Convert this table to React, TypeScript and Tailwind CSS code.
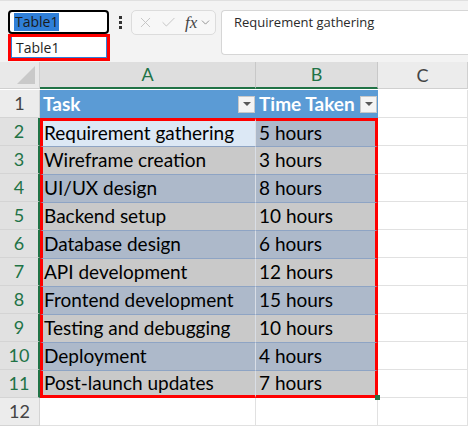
import { Check, ChevronDown, X } from "lucide-react";

const rows = [
    { task: "Requirement gathering", time: "5 hours" },
    { task: "Wireframe creation", time: "3 hours" },
    { task: "UI/UX design", time: "8 hours" },
    { task: "Backend setup", time: "10 hours" },
    { task: "Database design", time: "6 hours" },
    { task: "API development", time: "12 hours" },
    { task: "Frontend development", time: "15 hours" },
    { task: "Testing and debugging", time: "10 hours" },
    { task: "Deployment", time: "4 hours" },
    { task: "Post-launch updates", time: "7 hours" },
];

const cellFont = { fontFamily: "Lato, 'Liberation Sans', sans-serif" };

function FilterButton() {
    return (
        <span className="w-[17px] h-[17px] shrink-0 bg-[#f4f4f4] border border-[#c8c8c8] flex items-center justify-center">
            <span className="w-0 h-0 border-l-[4px] border-r-[4px] border-t-[4px] border-l-transparent border-r-transparent border-t-[#595959]" />
        </span>
    );
}

export default function App() {
    return (
        <div
            className="w-[468px] h-[426px] bg-[#f3f3f3] overflow-hidden"
            style={{ fontFamily: "'Segoe UI', 'Open Sans', sans-serif" }}
        >
            {/* toolbar */}
            <div className="relative h-[62px] flex items-start pt-[9px] border-t border-[#e0e0e0]">
                <div className="ml-[8px] w-[101px] h-[24px] border-2 border-black rounded-[4px] bg-white flex items-center pl-[4px]">
                    <span className="bg-[#2f7fd8] text-[#1a1a1a] text-[14px] leading-[18px] px-[1px]">Table1</span>
                </div>
                {/* name box dropdown */}
                <div className="absolute left-[8px] top-[33px] w-[102px] h-[27px] border-[3px] border-[#ff0000] bg-white">
                    <div className="h-full border border-[#2f7fd8] border-t-0 flex items-center pl-[4px] text-[14px] text-[#1f1f1f]">
                        Table1
                    </div>
                </div>
                <div className="w-[22px] h-[24px] flex flex-col items-center justify-center gap-[2px]">
                    <span className="w-[3px] h-[3px] bg-[#333]" />
                    <span className="w-[3px] h-[3px] bg-[#333]" />
                    <span className="w-[3px] h-[3px] bg-[#333]" />
                </div>
                <div className="w-[85px] h-[25px] border border-[#dcdcdc] rounded-[5px] bg-[#f7f7f7] flex items-center pl-[5px] text-[#c2c2c2]">
                    <X size={17} strokeWidth={1.3} />
                    <Check size={17} strokeWidth={1.3} className="ml-[6px]" />
                    <span
                        className="ml-[8px] text-[#444] italic text-[17px] leading-none"
                        style={{ fontFamily: "'Liberation Serif', serif" }}
                    >
                        fx
                    </span>
                    <ChevronDown size={13} strokeWidth={1.4} className="ml-[2px] text-[#777]" />
                </div>
                <div className="ml-[5px] flex-1 h-[45px] bg-white border border-[#d6d6d6] border-r-0 rounded-l-[4px] pl-[12px] pt-[2px] text-[13px] text-[#2a2a2a]">
                    Requirement gathering
                </div>
            </div>

            {/* grid */}
            <div
                className="grid grid-cols-[40px_216px_122px_1fr] auto-rows-[28px] bg-white"
                style={cellFont}
            >
                {/* column header */}
                <div className="h-[27px] bg-[#e9e9e9] border-r border-b border-[#d0d0d0] relative">
                    <span className="absolute right-[4px] bottom-[4px] w-0 h-0 border-l-[18px] border-b-[18px] border-l-transparent border-b-[#c9c9c9]" />
                </div>
                <div className="h-[27px] bg-[#dedede] border-r border-[#c8c8c8] border-b-2 border-b-[#217346] flex items-center justify-center text-[#217346] text-[18px]">
                    A
                </div>
                <div className="h-[27px] bg-[#dedede] border-r border-[#c8c8c8] border-b-2 border-b-[#217346] flex items-center justify-center text-[#217346] text-[18px]">
                    B
                </div>
                <div className="h-[27px] bg-[#ececec] border-r border-b border-[#d0d0d0] flex items-center justify-center text-[#444] text-[18px]">
                    C
                </div>

                {/* row 1 - table header */}
                <div className="bg-[#ececec] border-r border-b border-[#d4d4d4] flex items-center justify-center text-[18px] text-[#444]">
                    1
                </div>
                <div className="bg-[#5b9bd5] flex items-center justify-between pl-[3px] pr-[1px] text-white font-bold text-[19px]">
                    <span>Task</span>
                    <FilterButton />
                </div>
                <div className="bg-[#5b9bd5] flex items-center justify-between pl-[3px] pr-[1px] text-white font-bold text-[19px] whitespace-nowrap">
                    <span>Time Taken</span>
                    <FilterButton />
                </div>
                <div className="border-r border-b border-[#e1e1e1]" />

                {/* data rows */}
                {rows.map((r, i) => {
                    const even = i % 2 === 0;
                    const bg = even ? "bg-[#adb9ca]" : "bg-[#c9c9c9]";
                    const isFirst = i === 0;
                    const isLast = i === rows.length - 1;
                    return [
                        <div
                            key={`n${i}`}
                            className="bg-[#e1e1e1] border-r-2 border-r-[#217346] border-b border-b-[#d4d4d4] flex items-center justify-center text-[18px] text-[#217346]"
                        >
                            {i + 2}
                        </div>,
                        <div
                            key={`a${i}`}
                            className={`${isFirst ? "bg-[#dce8f5]" : bg} border-l-[3px] border-l-[#ff0000] border-r border-r-[#d9dee6] ${isFirst ? "border-t-[3px] border-t-[#ff0000]" : "border-t border-t-[#8ea4c4]"} ${isLast ? "border-b-[3px] border-b-[#ff0000]" : ""} flex items-center pl-[1px] text-[19px] text-black whitespace-nowrap`}
                        >
                            {r.task}
                        </div>,
                        <div
                            key={`b${i}`}
                            className={`${bg} border-r-[3px] border-r-[#ff0000] ${isFirst ? "border-t-[3px] border-t-[#ff0000]" : "border-t border-t-[#8ea4c4]"} ${isLast ? "border-b-[3px] border-b-[#ff0000]" : ""} relative flex items-center pl-[3px] text-[19px] text-black whitespace-nowrap`}
                        >
                            {r.time}
                            {isLast && (
                                <span className="absolute right-[-5px] bottom-[-5px] w-[5px] h-[5px] bg-[#217346]" />
                            )}
                        </div>,
                        <div key={`c${i}`} className="border-r border-b border-[#e1e1e1]" />,
                    ];
                })}

                {/* row 12 */}
                <div className="bg-[#ececec] border-r border-b border-[#d4d4d4] flex items-center justify-center text-[18px] text-[#444]">
                    12
                </div>
                <div className="border-r border-b border-[#e1e1e1]" />
                <div className="border-r border-b border-[#e1e1e1]" />
                <div className="border-r border-b border-[#e1e1e1]" />
            </div>
        </div>
    );
}
